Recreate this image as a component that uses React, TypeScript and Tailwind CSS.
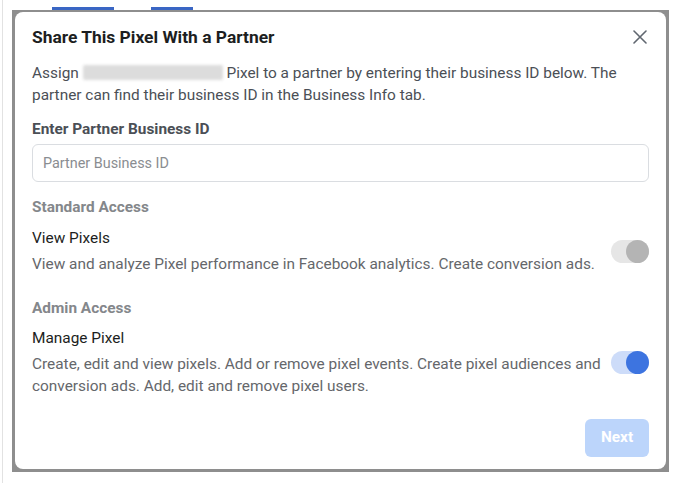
import React, { useState } from 'react';

type ToggleProps = {
  on: boolean,
  disabled?: boolean,
};

const Toggle = ({ on, disabled }: ToggleProps) => {
  if (disabled) {
    return (
      <div className="relative h-[23px] w-[38px] shrink-0 rounded-full bg-[#e6e6e6]">
        <div className="absolute right-0 top-0 h-[23px] w-[23px] rounded-full bg-[#b4b4b4]" />
      </div>
    );
  }
  return (
    <div className={`relative h-[23px] w-[38px] shrink-0 rounded-full ${on ? 'bg-[#cddcf9]' : 'bg-[#e6e6e6]'}`}>
      <div className={`absolute top-0 h-[23px] w-[23px] rounded-full ${on ? 'right-0 bg-[#3d74e0]' : 'left-0 bg-white'}`} />
    </div>
  );
};

type PermissionProps = {
  title: string,
  description: React.ReactNode,
  on: boolean,
  disabled?: boolean,
};

const Permission = ({ title, description, on, disabled }: PermissionProps) => (
  <div className="flex items-center justify-between gap-[8px]">
    <div className="min-w-0 flex-1">
      <div className="text-[15.4px] leading-[20px] text-[#1c1e21]">{title}</div>
      <p className="mt-[5px] text-[15.4px] leading-[22px] text-[#65676b]">{description}</p>
    </div>
    <Toggle on={on} disabled={disabled} />
  </div>
);

const App = () => {
  const [partnerId, setPartnerId] = useState('');

  return (
    <div className="h-[483px] w-[678px] overflow-hidden bg-white" style={{ fontFamily: 'Roboto, "Liberation Sans", sans-serif' }}>
      <div className="flex h-full">
        <div className="ml-[2px] w-px bg-[#e2e2e2]" />
        <div className="ml-[9px] flex flex-col pt-[7px]">
          <div className="flex h-[3px] gap-[37px] pl-[40px]">
            <div className="w-[62px] bg-[#3a66c4]" />
            <div className="w-[42px] bg-[#3a66c4]" />
          </div>
          <div className="h-[462px] w-[657px] bg-[#8e8e8e] px-[3px] pb-[3px] pt-[2px]">
            <div className="flex h-full flex-col rounded-[8px] bg-white px-[17px] pt-[14px]">
              <div className="flex items-center justify-between">
                <h2 className="text-[17.4px] font-bold leading-[22px] text-[#1c1e21]">Share This Pixel With a Partner</h2>
                <svg width="14" height="14" viewBox="0 0 14 14" className="mr-[2px]">
                  <path d="M1 1L13 13M13 1L1 13" stroke="#606770" strokeWidth="1.6" strokeLinecap="round" />
                </svg>
              </div>

              <p className="mt-[14px] text-[15.4px] leading-[22px] text-[#4b4f56]">
                Assign{' '}
                <span className="inline-block h-[15px] w-[140px] translate-y-[2px] rounded-[2px] bg-[#dcdcdc] blur-[1.5px]" />
                {' '}Pixel to a partner by entering their business ID below. The partner can find their business ID in the Business Info tab.
              </p>

              <label className="mt-[13px] text-[15.4px] font-bold leading-[20px] text-[#4b4f56]">Enter Partner Business ID</label>
              <input
                className="mt-[5px] h-[38px] w-full rounded-[6px] border border-[#dadde1] px-[10px] text-[14.4px] text-[#1c1e21] outline-none placeholder:text-[#8a8d91]"
                placeholder="Partner Business ID"
                value={partnerId}
                onChange={(event) => setPartnerId(event.target.value)}
              />

              <div className="mt-[15px] text-[15.4px] font-bold leading-[20px] text-[#84878b]">Standard Access</div>
              <div className="mt-[11px]">
                <Permission
                  title="View Pixels"
                  description="View and analyze Pixel performance in Facebook analytics. Create conversion ads."
                  on
                  disabled
                />
              </div>

              <div className="mt-[23px] text-[15.4px] font-bold leading-[20px] text-[#84878b]">Admin Access</div>
              <div className="mt-[10px]">
                <Permission
                  title="Manage Pixel"
                  description="Create, edit and view pixels. Add or remove pixel events. Create pixel audiences and conversion ads. Add, edit and remove pixel users."
                  on
                />
              </div>

              <div className="mt-auto flex justify-end pb-[12px]">
                <button className="h-[38px] w-[64px] rounded-[6px] bg-[#bcd5fb] text-[15.4px] font-bold text-white">Next</button>
              </div>
            </div>
          </div>
        </div>
      </div>
    </div>
  );
};

export default App;
